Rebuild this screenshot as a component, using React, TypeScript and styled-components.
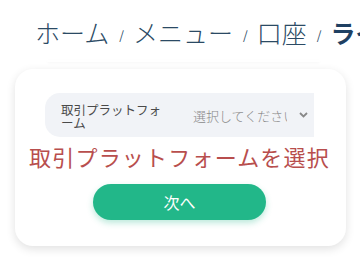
import React from "react";
import styled, { createGlobalStyle } from "styled-components";

const Global = createGlobalStyle`
  html, body { margin: 0; padding: 0; background: #ffffff; }
  body { font-family: "Noto Sans CJK JP", "Noto Sans", sans-serif; overflow: hidden; }
`;

const Page = styled.div`
  width: 360px;
  height: 257px;
  overflow: hidden;
  display: flex;
  flex-direction: column;
`;

const Breadcrumb = styled.nav`
  display: flex;
  align-items: center;
  white-space: nowrap;
  padding: 14px 0 0 35px;
  height: 36px;
  color: #2b4a64;
`;

const Crumb = styled.span<{ $active?: boolean }>`
  font-size: 25px;
  line-height: 36px;
  font-weight: ${(p) => (p.$active ? 700 : 300)};
  color: ${(p) => (p.$active ? "#1f4062" : "#2b4a64")};
`;

const Sep = styled.span`
  font-size: 12px;
  line-height: 36px;
  padding: 5px 9px 0 10px;
  color: #2b4a64;
`;

const Ghost = styled.div`
  margin: 10px 40px 0 47px;
  height: 2px;
  border-radius: 2px;
  box-shadow: 0 1px 3px rgba(0, 0, 0, 0.04);
`;

const Card = styled.div`
  margin: 7px 14px 0 15px;
  background: #fff;
  border-radius: 18px;
  box-shadow: 0 3px 10px rgba(0, 0, 0, 0.12);
  padding: 24px 32px 26px 30px;
  display: flex;
  flex-direction: column;
  align-items: center;
`;

const FieldRow = styled.div`
  align-self: stretch;
  height: 44px;
  background: #f1f3f7;
  border-radius: 15px 0 0 15px;
  display: flex;
  align-items: center;
  padding-left: 16px;
  overflow: hidden;
`;

const Label = styled.div`
  width: 108px;
  flex: none;
  font-size: 12.5px;
  font-weight: 400;
  line-height: 13px;
  color: #4a4a4a;
  padding-top: 2px;
`;

const Select = styled.div`
  flex: 1;
  display: flex;
  align-items: center;
  justify-content: space-between;
  padding: 0 6px 0 24px;
  color: #8a8a8a;
  font-size: 13px;
  font-weight: 300;
  min-width: 0;
`;

const Placeholder = styled.span`
  white-space: nowrap;
  overflow: hidden;
  width: 94px;
`;

const ErrorText = styled.div`
  margin-top: 3px;
  font-size: 22px;
  letter-spacing: 1.2px;
  line-height: 32px;
  color: #b84e4d;
  white-space: nowrap;
`;

const NextButton = styled.button`
  margin-top: 12px;
  width: 173px;
  height: 36px;
  border: none;
  border-radius: 18px;
  background: #22b789;
  color: #fff;
  font-family: "Noto Sans CJK JP", sans-serif;
  font-size: 16px;
  font-weight: 400;
  box-shadow: 0 3px 6px rgba(34, 183, 137, 0.3);
`;

const Chevron = () => (
  <svg width="9" height="6" viewBox="0 0 9 6">
    <path d="M1 1l3.5 3.5L8 1" fill="none" stroke="#888" strokeWidth="1.8" />
  </svg>
);

export default function App() {
  return (
    <Page>
      <Global />
      <Breadcrumb>
        <Crumb>ホーム</Crumb>
        <Sep>/</Sep>
        <Crumb>メニュー</Crumb>
        <Sep>/</Sep>
        <Crumb>口座</Crumb>
        <Sep>/</Sep>
        <Crumb $active>ライブ口座</Crumb>
      </Breadcrumb>
      <Ghost />
      <Card>
        <FieldRow>
          <Label>取引プラットフォーム</Label>
          <Select>
            <Placeholder>選択してください</Placeholder>
            <Chevron />
          </Select>
        </FieldRow>
        <ErrorText>取引プラットフォームを選択</ErrorText>
        <NextButton>次へ</NextButton>
      </Card>
    </Page>
  );
}
